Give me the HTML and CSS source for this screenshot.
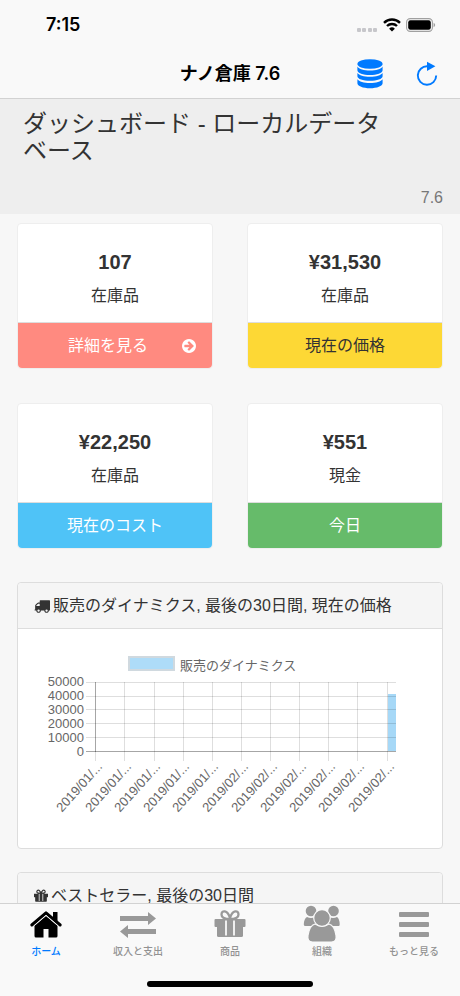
FILE: index.html
```html
<!DOCTYPE html>
<html lang="ja">
<head>
<meta charset="utf-8">
<meta name="viewport" content="width=device-width, initial-scale=1">
<title>ナノ倉庫 7.6</title>
<link rel="stylesheet" href="styles.css">
</head>
<body>
<div class="app">
  <header class="topbar">
    <div class="status">
      <span class="clock">7:15</span>
      <span class="signals">
        <svg width="22" height="16" viewBox="0 0 22 16" fill="#c7c7cb"><rect x="1" y="11" width="4" height="4" rx="1"/><rect x="6" y="11" width="4" height="4" rx="1"/><rect x="12" y="11" width="4" height="4" rx="1"/><rect x="17" y="11" width="4" height="4" rx="1"/></svg>
        <svg width="18" height="14" viewBox="0 0 18 14"><g fill="none" stroke="#000" stroke-width="2.4"><path d="M1 4.8a11.4 11.4 0 0 1 16 0"/><path d="M4 8a7.2 7.2 0 0 1 10 0"/></g><path d="M9 13.6 6.1 10.7a4.2 4.2 0 0 1 5.8 0z"/></svg>
        <svg width="30" height="14" viewBox="0 0 30 14"><rect x=".6" y=".6" width="25.8" height="12.8" rx="3.6" fill="none" stroke="#a0a0a0" stroke-width="1.1"/><rect x="2.2" y="2.2" width="22.6" height="9.6" rx="2.2"/><path d="M27.6 4.8v4.4q1.6-.7 1.6-2.2t-1.6-2.2z" fill="#a0a0a0"/></svg>
      </span>
    </div>
    <div class="nav">
      <h1 class="nav-title">ナノ倉庫 7.6</h1>
      <div class="nav-actions">
        <button class="icon-button" type="button" aria-label="データベース">
          <svg width="26" height="30" viewBox="0 0 26 30" fill="#007aff"><ellipse cx="13" cy="5" rx="12.6" ry="4.8"/><path d="M.4 7.6c1.6 2.7 6.500 4 12.600 4s11-1.300 12.600-4v3.700c0 2.700-5.600 4.800-12.600 4.800S.4 14 .4 11.300z"/><path d="M.4 14c1.600 2.400 6.500 3.700 12.600 3.700s11-1.300 12.600-3.700v3.200c0 2.700-5.600 4.600-12.600 4.600S.4 19.900.4 17.200z"/><path d="M.4 20.200c1.600 2.400 6.500 3.700 12.600 3.700s11-1.300 12.600-3.700v4c0 2.700-5.600 5-12.600 5S.4 26.900.4 24.200z"/></svg>
        </button>
        <button class="icon-button" type="button" aria-label="更新">
          <svg width="22" height="26" viewBox="0 0 22 26"><path d="M11.500 5.300A9.200 9.200 0 1 0 20.200 14.500" fill="none" stroke="#007aff" stroke-width="1.900"/><path d="M11 .7 19.400 5.300 11 9.900z" fill="#007aff"/></svg>
        </button>
      </div>
    </div>
  </header>

  <main class="content">
    <section class="hero">
      <h2 class="hero-title">ダッシュボード - ローカルデータベース</h2>
      <p class="hero-version">7.6</p>
    </section>

    <section class="cards">
      <article class="card">
        <div class="card-body"><strong class="card-value">107</strong><span>在庫品</span></div>
        <a class="card-footer coral" href="#details"><span class="card-label">詳細を見る</span><svg class="card-arrow" width="16" height="16" viewBox="128 128 1536 1536" fill="#fff"><path d="M1413 896q0-27-18-45l-91-91-362-362q-18-18-45-18t-45 18l-91 91q-18 18-18 45t18 45l189 189h-502q-26 0-45 19t-19 45v128q0 26 19 45t45 19h502l-189 189q-19 19-19 45t19 45l91 91q18 18 45 18t45-18l362-362 91-91q18-18 18-45zm251 0q0 209-103 385.500t-279.500 279.500-385.500 103-385.500-103-279.500-279.500-103-385.500 103-385.500 279.500-279.500 385.500-103 385.500 103 279.500 279.500 103 385.500z"/></svg></a>
      </article>
      <article class="card">
        <div class="card-body"><strong class="card-value">¥31,530</strong><span>在庫品</span></div>
        <div class="card-footer yellow">現在の価格</div>
      </article>
      <article class="card">
        <div class="card-body"><strong class="card-value">¥22,250</strong><span>在庫品</span></div>
        <div class="card-footer blue">現在のコスト</div>
      </article>
      <article class="card">
        <div class="card-body"><strong class="card-value">¥551</strong><span>現金</span></div>
        <div class="card-footer green">今日</div>
      </article>
    </section>

    <section class="panel">
      <h3 class="panel-title">
        <svg width="16" height="16" viewBox="0 0 1792 1792" fill="#333"><path d="M640 1408q0-52-38-90t-90-38-90 38-38 90 38 90 90 38 90-38 38-90zm-384-512h384v-256h-158q-13 0-22 9l-195 195q-9 9-9 22v30zm1280 512q0-52-38-90t-90-38-90 38-38 90 38 90 90 38 90-38 38-90zm256-1088v1024q0 15-4 26.500t-13.500 18.500-16.500 11.500-23.500 6-22.500 2-25.500 0-22.500-.5q0 106-75 181t-181 75-181-75-75-181h-384q0 106-75 181t-181 75-181-75-75-181h-64q-3 0-22.500.5t-25.500 0-22.500-2-23.500-6-16.500-11.500-13.500-18.500-4-26.500q0-26 19-45t45-19v-320q0-8-.5-35t0-38 2.500-34.500 6.500-37 14-30.500 22.500-30l198-198q19-19 50.500-32t58.500-13h160v-192q0-26 19-45t45-19h1024q26 0 45 19t19 45z"/></svg>
        <span>販売のダイナミクス, 最後の30日間, 現在の価格</span>
      </h3>
      <div class="panel-body">
        <svg class="chart" viewBox="0 0 394 189" role="img" aria-label="販売のダイナミクス">
          <rect x="96" y="13" width="45" height="13" fill="#aedcf8" stroke="#d0d9df" stroke-width="2"/>
          <text class="legend" x="147" y="26">販売のダイナミクス</text>
          <rect x="355" y="50" width="8" height="57" fill="#a6d8f7"/>
          <g class="grid">
            <path d="M53 38.500h310M53 52.500h310M53 65.500h310M53 79.500h310M53 93.500h310"/>
            <path d="M91.500 38v79M121.500 38v79M150.500 38v79M179.500 38v79M208.500 38v79M237.500 38v79M266.500 38v79M295.500 38v79M324.500 38v79M354.500 38v79"/>
          </g>
          <path class="axis" d="M53 107.500h310M62.500 38v70"/>
          <path class="grid" d="M62.500 108v9"/>
          <g class="ticks">
            <text x="51" y="42">50000</text>
            <text x="51" y="56">40000</text>
            <text x="51" y="70">30000</text>
            <text x="51" y="84">20000</text>
            <text x="51" y="98">10000</text>
            <text x="51" y="112">0</text>
          </g>
          <g class="ticks">
            <text transform="translate(70 123) rotate(-48)">2019/01/...</text>
            <text transform="translate(99 123) rotate(-48)">2019/01/...</text>
            <text transform="translate(128 123) rotate(-48)">2019/01/...</text>
            <text transform="translate(157 123) rotate(-48)">2019/01/...</text>
            <text transform="translate(186 123) rotate(-48)">2019/01/...</text>
            <text transform="translate(216 123) rotate(-48)">2019/02/...</text>
            <text transform="translate(245 123) rotate(-48)">2019/02/...</text>
            <text transform="translate(274 123) rotate(-48)">2019/02/...</text>
            <text transform="translate(303 123) rotate(-48)">2019/02/...</text>
            <text transform="translate(332 123) rotate(-48)">2019/02/...</text>
            <text transform="translate(362 123) rotate(-48)">2019/02/...</text>
          </g>
        </svg>
      </div>
    </section>

    <section class="panel">
      <h3 class="panel-title">
        <svg width="14" height="14" viewBox="128 128 1536 1536" fill="#333"><path fill-rule="evenodd" d="M600 512h195l-126-161q-26-31-69-31-40 0-68 28t-28 68 28 68 68 28zm688-96q0-40-28-68t-68-28q-43 0-69 31l-125 161h194q40 0 68-28t28-68zm376 256v320q0 14-9 23t-23 9h-96v416q0 40-28 68t-68 28h-1088q-40 0-68-28t-28-68v-416h-96q-14 0-23-9t-9-23v-320q0-14 9-23t23-9h440q-93 0-158.500-65.500t-65.500-158.500 65.500-158.500 158.500-65.500q107 0 168 77l128 165 128-165q61-77 168-77 93 0 158.500 65.500t65.500 158.500-65.500 158.500-158.500 65.500h440q14 0 23 9t9 23z"/><path d="M700 660v780M1092 660v780" stroke="#f5f5f5" stroke-width="90"/></svg>
        <span>ベストセラー, 最後の30日間</span>
      </h3>
      <div class="panel-body"></div>
    </section>
  </main>

  <footer class="bottom">
    <nav class="tabs">
      <a class="tab active" href="#home">
        <svg width="34" height="34" viewBox="0 0 34 34"><path d="M17 9 28.500 18.800V29q0 1.500-1.500 1.500h-7.500V22h-5v8.500H7Q5.500 30.500 5.500 29V18.800z"/><path d="M2.800 18 17 5.800 31.200 18" fill="none" stroke="#000" stroke-width="3" stroke-linecap="round" stroke-linejoin="round"/><path d="M17 8.400 29.500 19.200" fill="none" stroke="#f9f9f9" stroke-width=".8"/><path d="M4.500 19.200 17 8.400" fill="none" stroke="#f9f9f9" stroke-width=".8"/><path d="M24 5h4.500v9.500L24 11z"/></svg>
        <span>ホーム</span>
      </a>
      <a class="tab" href="#money">
        <svg width="38" height="34" viewBox="0 0 38 34"><path d="M1 9h28V5l8 6.500-8 6.500v-4H1z M37 22H9v-4l-8 6.500L9 31v-4h28z"/></svg>
        <span>収入と支出</span>
      </a>
      <a class="tab" href="#goods">
        <svg width="34" height="34" viewBox="0 0 34 34"><path d="M17 12C13 12 8.500 11 8.500 7.500 8.500 3 14.500 2.500 17 11c2.500-8.500 8.500-8 8.500-3.500C25.500 11 21 12 17 12z" fill="none" stroke="#999" stroke-width="2.300"/><rect x="1.500" y="12" width="31" height="8" rx="1"/><path d="M4 20h26v8.500q0 1.500-1.500 1.500h-23Q4 30 4 28.500z"/><path d="M13 13.500v15M21 13.500v15" stroke="#f9f9f9" stroke-width="1.800"/></svg>
        <span>商品</span>
      </a>
      <a class="tab" href="#organization">
        <svg width="38" height="38" viewBox="0 0 38 38"><circle cx="8" cy="6" r="5.300"/><circle cx="30.500" cy="6" r="5.300"/><path d="M4 12q4 2 8 0l3 9H2.500q-1.800 0-1.700-1.500.2-6 3.200-7.500zM34 12q-4 2-8 0l-3 9h12.500q1.200 0 1.200-1.500-.2-6-2.700-7.500z"/><g stroke="#f9f9f9" stroke-width="1.200"><path d="M12 19q7 4.500 14 0 5.500 1.500 7 11.500 1 6.500-4.500 6.500h-19Q4 37 5 30.500 6.500 20.500 12 19z"/><circle cx="19" cy="13" r="8.300"/></g></svg>
        <span>組織</span>
      </a>
      <a class="tab" href="#more">
        <svg width="32" height="34" viewBox="0 0 32 34"><rect x="1" y="5" width="30" height="5" rx="1"/><rect x="1" y="15" width="30" height="5" rx="1"/><rect x="1" y="25" width="30" height="5" rx="1"/></svg>
        <span>もっと見る</span>
      </a>
    </nav>
    <div class="home-indicator"></div>
  </footer>
</div>
</body>
</html>
```
FILE: styles.css
```css
* {
  box-sizing: border-box;
}

body {
  margin: 0;
  background: #f7f7f7;
  color: #333;
  font: 16px/22px "Liberation Sans", "Noto Sans CJK JP", sans-serif;
}

h1, h2, h3, p {
  margin: 0;
  font-weight: 400;
}

a {
  color: inherit;
  text-decoration: none;
}

svg {
  display: block;
  flex: none;
}

.app {
  display: flex;
  flex-direction: column;
  height: 100vh;
}

/* Top bar */
.topbar {
  flex: none;
  background: #f9f9f9;
  border-bottom: 1px solid #d2d2d2;
  color: #000;
}

.status {
  display: flex;
  align-items: center;
  justify-content: space-between;
  height: 50px;
  padding: 0 24px 0 46px;
}

.clock {
  font: 600 18px/22px Inter, sans-serif;
}

.signals {
  display: flex;
  align-items: center;
  gap: 5px;
}

.nav {
  display: grid;
  grid-template-columns: 1fr auto 1fr;
  align-items: center;
  height: 48px;
  padding: 0 22px;
}

.nav-title {
  grid-column: 2;
  font: 600 18px/24px Inter, "Noto Sans CJK JP", sans-serif;
}

.nav-actions {
  display: flex;
  justify-content: flex-end;
  gap: 33px;
}

.icon-button {
  display: flex;
  align-items: center;
  justify-content: center;
  padding: 0;
  border: 0;
  background: none;
}

/* Scrolling content */
.content {
  flex: 1;
  min-height: 0;
  overflow-y: auto;
  scrollbar-width: none;
}

.hero {
  padding: 11px 17px 5px 23px;
  background: #eee;
}

.hero-title {
  padding-right: 50px;
  font-size: 24px;
  line-height: 27px;
}

.hero-version {
  margin-top: 23px;
  color: #777;
  text-align: right;
}

.cards {
  display: grid;
  grid-template-columns: 1fr 1fr;
  gap: 34px;
  padding: 9px 17px 33px;
}

.card {
  border: 1px solid #eee;
  border-radius: 4px;
  background: #fff;
  text-align: center;
}

.card-body {
  display: flex;
  flex-direction: column;
  gap: 12px;
  padding: 27px 0 15px;
}

.card-value {
  font-size: 20px;
  line-height: 22px;
}

.card-footer {
  display: flex;
  align-items: center;
  justify-content: center;
  height: 46px;
  border-top: 1px solid #ddd;
  border-radius: 0 0 4px 4px;
  color: #fff;
}

.card-label {
  flex: 1;
  padding-left: 16px;
}

.card-arrow {
  width: 14px;
  margin-right: 16px;
}

.coral {
  background: #ff8a80;
}

.yellow {
  background: #fdd835;
  color: #333;
}

.blue {
  background: #4fc3f7;
}

.green {
  background: #66bb6a;
}

.panel {
  margin: 0 17px 23px;
  border: 1px solid #ddd;
  border-radius: 4px;
  background: #fff;
}

.panel-title {
  display: flex;
  align-items: center;
  gap: 3px;
  padding: 12px 16px 11px;
  border-bottom: 1px solid #ddd;
  border-radius: 4px 4px 0 0;
  background: #f5f5f5;
  font-size: 16px;
  white-space: nowrap;
}

.panel-body {
  padding: 15px;
}

/* Chart */
.chart {
  width: 100%;
  font-size: 13px;
  fill: #666;
}

.ticks {
  text-anchor: end;
}

.grid {
  fill: none;
  stroke: #000;
  stroke-opacity: 0.13;
}

.axis {
  fill: none;
  stroke: #000;
  stroke-opacity: 0.35;
}

/* Bottom tabs */
.bottom {
  flex: none;
  padding-bottom: 9px;
  border-top: 1px solid #d2d2d2;
  background: #f9f9f9;
}

.tabs {
  display: grid;
  grid-template-columns: repeat(5, 1fr);
  height: 77px;
}

.tab {
  display: grid;
  grid-template-rows: 40px 14px;
  align-content: start;
  place-items: center;
  color: #929292;
  fill: #999;
  font: 500 10px/14px "Noto Sans CJK JP", sans-serif;
}

.tab.active {
  color: #007aff;
  fill: #000;
}

.home-indicator {
  width: 36%;
  height: 6px;
  margin: 0 auto;
  border-radius: 3px;
  background: #000;
}
```
